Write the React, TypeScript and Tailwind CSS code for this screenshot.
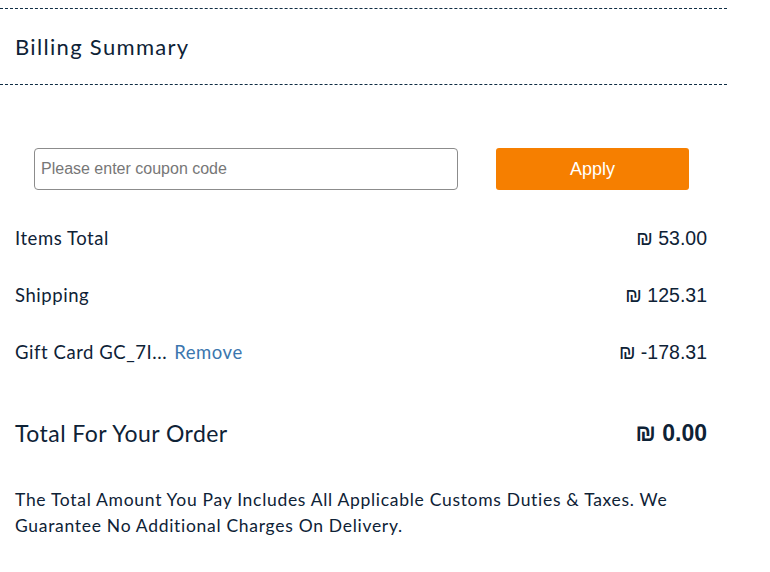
import { useState } from "react";

const rows = [
  { label: "Items Total", amount: "53.00" },
  { label: "Shipping", amount: "125.31" },
  { label: "Gift Card GC_7I...", amount: "-178.31", removable: true },
];

const Amount = ({ value, bold }: { value: string; bold?: boolean }) => (
  <span
    className={
      "font-['Liberation_Sans',Arial,sans-serif] text-[#0e2236] " +
      (bold ? "text-[23px] font-bold" : "text-[19.5px]")
    }
  >
    ₪ {value}
  </span>
);

export default function App() {
  const [code, setCode] = useState("");

  return (
    <div className="w-[727px] bg-white font-['Lato',sans-serif] text-[#0e2236]">
      <div className="mt-[8px] flex h-[77px] items-center border-y border-dashed border-[#0f2d44] px-[15px]">
        <h2 className="text-[22px] tracking-[0.06em]">Billing Summary</h2>
      </div>

      <div className="mt-[63px] flex gap-[38px] pl-[34px]">
        <input
          type="text"
          value={code}
          onChange={(e) => setCode(e.target.value)}
          placeholder="Please enter coupon code"
          className="h-[42px] w-[424px] rounded-[4px] border border-[#8c8c8c] px-[6px] font-['Liberation_Sans',Arial,sans-serif] text-[16px] text-[#333] placeholder:text-[#777] focus:outline-none"
        />
        <button
          type="button"
          className="h-[42px] w-[193px] rounded-[3px] bg-[#f67f00] font-['Liberation_Sans',Arial,sans-serif] text-[18px] text-white"
        >
          Apply
        </button>
      </div>

      <ul className="mt-[20px]">
        {rows.map((row) => (
          <li
            key={row.label}
            className="flex h-[57px] items-center justify-between pl-[15px] pr-[20px]"
          >
            <span className="text-[18.5px] tracking-[0.03em]">
              {row.label}
              {row.removable && (
                <button type="button" className="ml-[7px] tracking-[0.03em] text-[#3b76ae]">
                  Remove
                </button>
              )}
            </span>
            <Amount value={row.amount} />
          </li>
        ))}
      </ul>

      <div className="mt-[24px] flex h-[57px] items-center justify-between pl-[15px] pr-[20px]">
        <span className="text-[23px] tracking-[0.02em]">Total For Your Order</span>
        <Amount value="0.00" bold />
      </div>

      <p className="mt-[25px] w-[700px] px-[15px] text-[17.5px] leading-[26px] tracking-[0.04em]">
        The Total Amount You Pay Includes All Applicable Customs Duties &amp; Taxes. We
        Guarantee No Additional Charges On Delivery.
      </p>
    </div>
  );
}
